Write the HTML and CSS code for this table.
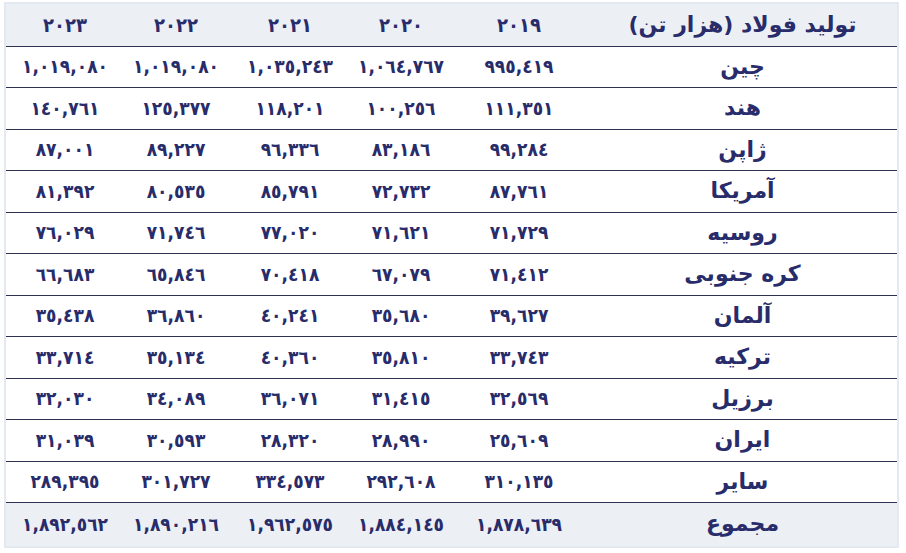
FILE: index.html
```html
<!DOCTYPE html>
<html lang="fa" dir="rtl">
<head>
<meta charset="utf-8">
<link rel="stylesheet" href="styles.css">
</head>
<body>
<div class="wrap">
<table class="steel">
<colgroup>
<col class="c-name"><col class="c-19"><col class="c-20"><col class="c-21"><col class="c-22"><col class="c-23">
</colgroup>
<thead>
<tr><th>تولید فولاد (هزار تن)</th><th>٢٠١٩</th><th>٢٠٢٠</th><th>٢٠٢١</th><th>٢٠٢٢</th><th>٢٠٢٣</th></tr>
</thead>
<tbody>
<tr><td>چین</td><td>٩٩٥,٤١٩</td><td>١,٠٦٤,٧٦٧</td><td>١,٠٣٥,٢٤٣</td><td>١,٠١٩,٠٨٠</td><td>١,٠١٩,٠٨٠</td></tr>
<tr><td>هند</td><td>١١١,٣٥١</td><td>١٠٠,٢٥٦</td><td>١١٨,٢٠١</td><td>١٢٥,٣٧٧</td><td>١٤٠,٧٦١</td></tr>
<tr><td>ژاپن</td><td>٩٩,٢٨٤</td><td>٨٣,١٨٦</td><td>٩٦,٣٣٦</td><td>٨٩,٢٢٧</td><td>٨٧,٠٠١</td></tr>
<tr><td>آمریکا</td><td>٨٧,٧٦١</td><td>٧٢,٧٣٢</td><td>٨٥,٧٩١</td><td>٨٠,٥٣٥</td><td>٨١,٣٩٢</td></tr>
<tr><td>روسیه</td><td>٧١,٧٢٩</td><td>٧١,٦٢١</td><td>٧٧,٠٢٠</td><td>٧١,٧٤٦</td><td>٧٦,٠٢٩</td></tr>
<tr><td>کره جنوبی</td><td>٧١,٤١٢</td><td>٦٧,٠٧٩</td><td>٧٠,٤١٨</td><td>٦٥,٨٤٦</td><td>٦٦,٦٨٣</td></tr>
<tr><td>آلمان</td><td>٣٩,٦٢٧</td><td>٣٥,٦٨٠</td><td>٤٠,٢٤١</td><td>٣٦,٨٦٠</td><td>٣٥,٤٣٨</td></tr>
<tr><td>ترکیه</td><td>٣٣,٧٤٣</td><td>٣٥,٨١٠</td><td>٤٠,٣٦٠</td><td>٣٥,١٣٤</td><td>٣٣,٧١٤</td></tr>
<tr><td>برزیل</td><td>٣٢,٥٦٩</td><td>٣١,٤١٥</td><td>٣٦,٠٧١</td><td>٣٤,٠٨٩</td><td>٣٢,٠٣٠</td></tr>
<tr><td>ایران</td><td>٢٥,٦٠٩</td><td>٢٨,٩٩٠</td><td>٢٨,٣٢٠</td><td>٣٠,٥٩٣</td><td>٣١,٠٣٩</td></tr>
<tr><td>سایر</td><td>٣١٠,١٣٥</td><td>٢٩٢,٦٠٨</td><td>٣٣٤,٥٧٣</td><td>٣٠١,٧٢٧</td><td>٢٨٩,٣٩٥</td></tr>
</tbody>
<tfoot>
<tr><td>مجموع</td><td>١,٨٧٨,٦٣٩</td><td>١,٨٨٤,١٤٥</td><td>١,٩٦٢,٥٧٥</td><td>١,٨٩٠,٢١٦</td><td>١,٨٩٢,٥٦٢</td></tr>
</tfoot>
</table>
</div>
</body>
</html>
```

FILE: styles.css
```css
html, body {
  margin: 0;
  padding: 0;
  background: #ffffff;
}
body {
  font-family: "DejaVu Sans", sans-serif;
  color: #282c6a;
}
.wrap {
  margin: 2px 7px 0 4px;
  width: 895px;
  border: 2px solid #e2e9f0;
  box-sizing: border-box;
}
.steel {
  width: 100%;
  border-collapse: collapse;
  table-layout: fixed;
  font-weight: bold;
  font-size: 19px;
}
.c-name { width: 309px; }
.c-19 { width: 138px; }
.c-20 { width: 98px; }
.c-21 { width: 124px; }
.c-22 { width: 104px; }
.c-23 { width: 118px; }
.steel th, .steel td {
  text-align: center;
  padding: 0;
  white-space: nowrap;
  line-height: 1;
  font-family: "DejaVu Sans Condensed", "DejaVu Sans", sans-serif;
  font-stretch: condensed;
}
.steel th:first-child, .steel td:first-child {
  font-size: 22px;
  font-family: "DejaVu Sans", sans-serif;
  font-stretch: normal;
}
.steel thead th {
  font-size: 20px;
}
.steel thead tr {
  background: #eceff3;
  height: 42px;
  border-bottom: 1px solid #2d3152;
}
.steel tbody tr {
  height: 41.5px;
  border-bottom: 1px solid #2d3152;
}
.steel tfoot tr {
  background: #eceff3;
  height: 43px;
}
```
